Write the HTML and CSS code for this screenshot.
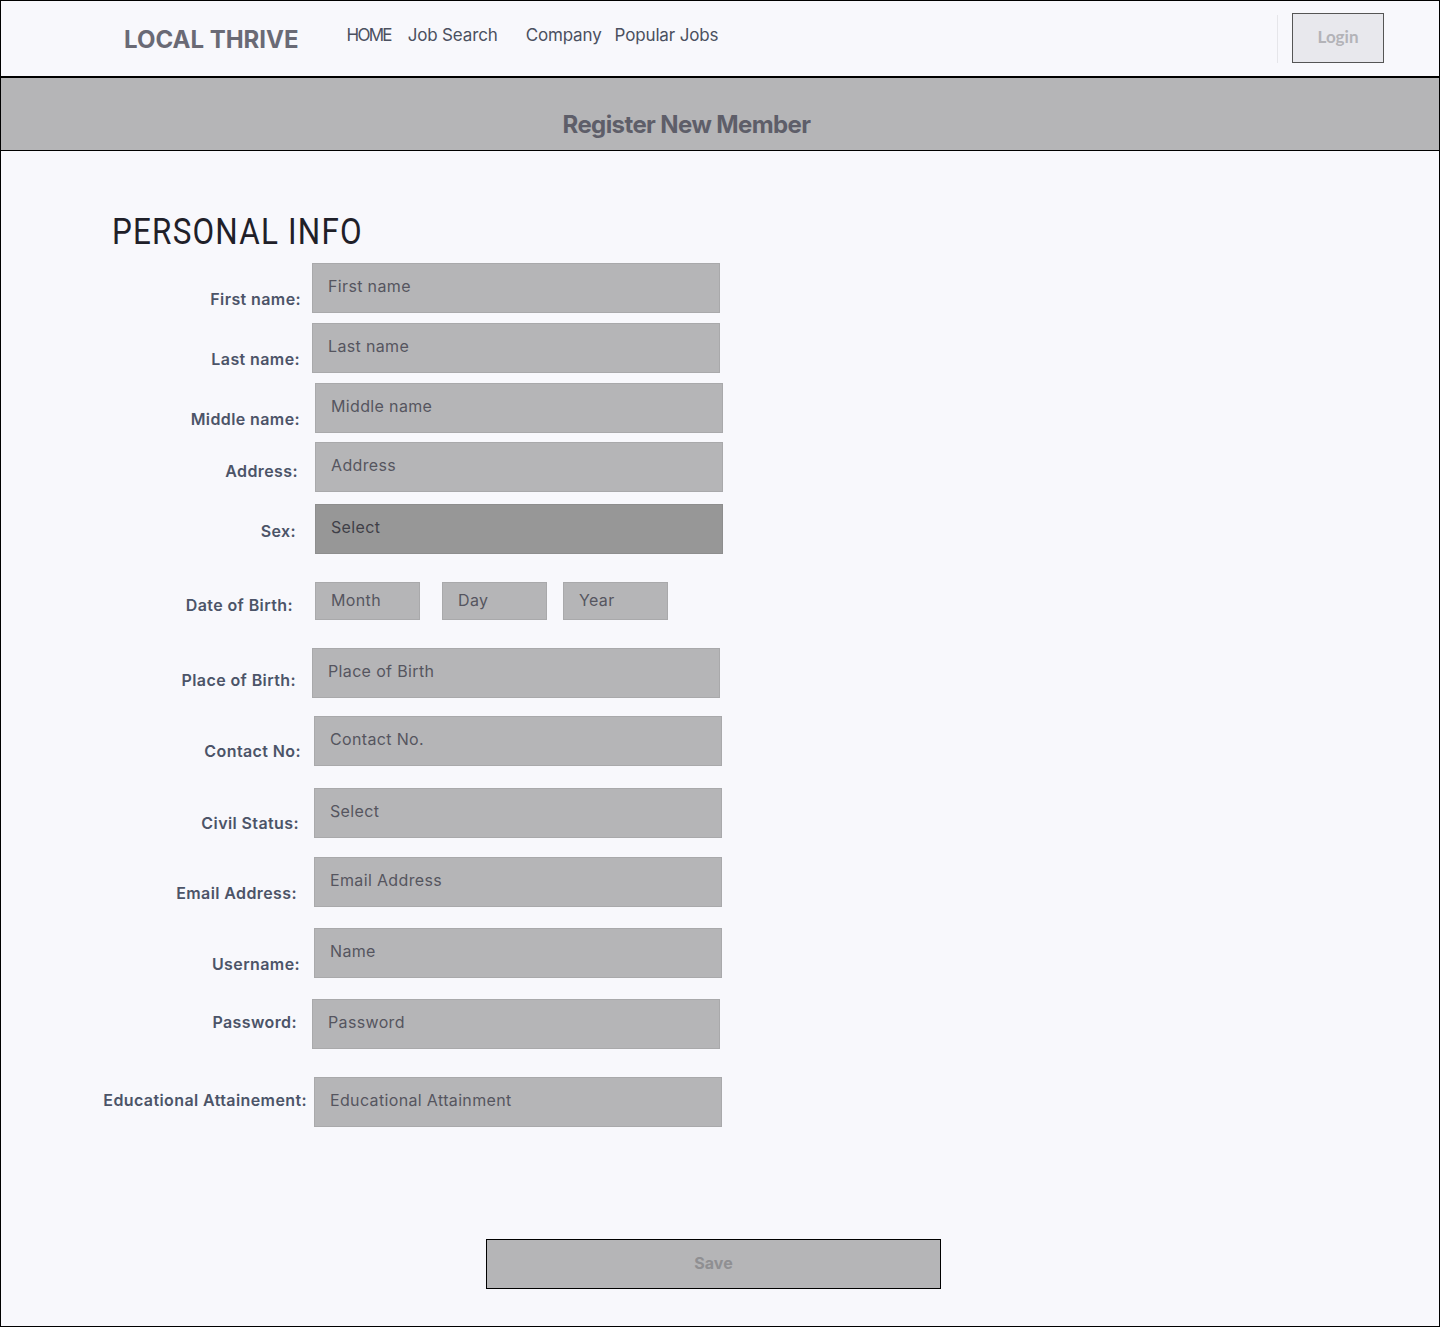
FILE: index.html
```html
<!DOCTYPE html>
<html lang="en">
<head>
<meta charset="utf-8">
<title>Register New Member</title>
<link rel="stylesheet" href="styles.css">
</head>
<body>
<div class="page">
  <header class="topbar">
    <div class="logo">LOCAL THRIVE</div>
    <nav class="nav">
      <a class="nav-home">HOME</a>
      <a class="nav-jobs">Job Search</a>
      <a class="nav-company">Company</a>
      <a class="nav-popular">Popular Jobs</a>
    </nav>
    <div class="divider"></div>
    <button class="login">Login</button>
  </header>
  <div class="banner"><h1>Register New Member</h1></div>
  <main class="main">
    <h2 class="section-title">PERSONAL INFO</h2>
    <form class="form">
      <div class="row r-first"><label>First name:</label><div class="field">First name</div></div>
      <div class="row r-last"><label>Last name:</label><div class="field">Last name</div></div>
      <div class="row r-middle"><label>Middle name:</label><div class="field">Middle name</div></div>
      <div class="row r-address"><label>Address:</label><div class="field">Address</div></div>
      <div class="row r-sex"><label>Sex:</label><div class="field select">Select</div></div>
      <div class="row r-dob"><label>Date of Birth:</label>
        <div class="dob">
          <div class="field small">Month</div>
          <div class="field small day">Day</div>
          <div class="field small year">Year</div>
        </div>
      </div>
      <div class="row r-place"><label>Place of Birth:</label><div class="field">Place of Birth</div></div>
      <div class="row r-contact"><label>Contact No:</label><div class="field">Contact No.</div></div>
      <div class="row r-civil"><label>Civil Status:</label><div class="field">Select</div></div>
      <div class="row r-email"><label>Email Address:</label><div class="field">Email Address</div></div>
      <div class="row r-user"><label>Username:</label><div class="field">Name</div></div>
      <div class="row r-pass"><label>Password:</label><div class="field">Password</div></div>
      <div class="row r-edu"><label>Educational Attainement:</label><div class="field">Educational Attainment</div></div>
      <button type="button" class="save">Save</button>
    </form>
  </main>
</div>
</body>
</html>
```

FILE: styles.css
```css
* { box-sizing: border-box; }
html, body { margin: 0; padding: 0; }
body {
  background: #f8f8fc;
  font-family: Inter, "Noto Sans", sans-serif;
}
.page {
  width: 1440px;
  height: 1327px;
  border: 1px solid #000;
  background: #f8f8fc;
  display: flex;
  flex-direction: column;
}
.topbar {
  height: 77px;
  border-bottom: 2px solid #000;
  display: flex;
  align-items: flex-start;
}
.logo {
  margin: 25px 0 0 123px;
  font-family: Inter, sans-serif;
  font-weight: 700;
  font-size: 24px;
  line-height: 28px;
  letter-spacing: 0;
  color: #6a6a75;
}
.nav {
  display: flex;
  margin: 24px 0 0 48px;
  font-size: 17px;
  line-height: 20px;
  color: #4b5060;
}
.nav a { display: block; letter-spacing: -0.15px; }
.nav .nav-home { letter-spacing: -1.8px; }
.nav-jobs { margin-left: 17px; }
.nav-company { margin-left: 28px; }
.nav-popular { margin-left: 13px; }
.divider {
  margin: 14px 0 0 auto;
  width: 1px;
  height: 48px;
  background: #e6e6ea;
}
.login {
  margin: 12px 55px 0 14px;
  width: 92px;
  height: 50px;
  border: 1px solid #555;
  background: #e8e8ed;
  color: #b3b3b8;
  font-family: Lato, sans-serif;
  font-weight: 700;
  font-size: 17px;
  padding: 0 0 3px;
}
.banner {
  height: 73px;
  background: #b5b5b7;
  border-bottom: 1px solid #000;
  display: flex;
  justify-content: center;
}
.banner h1 {
  margin: 32px 0 0 -67px;
  font-size: 24px;
  line-height: 30px;
  font-weight: 700;
  letter-spacing: -0.6px;
  color: #5e5e69;
}
.main {
  flex: 1;
}
.section-title {
  margin: 58px 0 0 111px;
  font-family: Roboto, sans-serif;
  font-weight: 400;
  font-size: 37px;
  line-height: 46px;
  letter-spacing: 1.4px;
  color: #1f2029;
  transform: scaleX(0.85);
  transform-origin: left center;
}
.form {
  margin: 8px 0 0 -1px;
  display: flex;
  flex-direction: column;
}
.row {
  display: flex;
  align-items: flex-start;
  margin-top: var(--mt);
}
.row label {
  width: var(--lr);
  flex: none;
  text-align: right;
  padding-top: calc(var(--ly) - 10px);
  font-size: 16px;
  line-height: 20px;
  font-weight: 600;
  letter-spacing: 0.4px;
  color: #4c5468;
  white-space: nowrap;
}
.field {
  margin-left: calc(var(--ix) - var(--lr));
  width: 408px;
  height: 50px;
  background: #b5b5b7;
  border: 1px solid #a9a9ab;
  padding: 12px 0 0 15px;
  font-size: 16px;
  line-height: 20px;
  color: #55555f;
  letter-spacing: 0.35px;
}
.field.select { background: #979797; border-color: #8e8e8e; color: #3f3f47; }
.dob { display: flex; margin-left: calc(var(--ix) - var(--lr)); }
.field.small {
  margin-left: 0;
  width: 105px;
  height: 38px;
  padding-top: 7px;
}
.field.day { margin-left: 22px; }
.field.year { margin-left: 16px; }

.r-first   { --mt: 0px;  --lr: 301px; --ix: 312px; --ly: 36px; }
.r-last    { --mt: 10px; --lr: 300px; --ix: 312px; --ly: 36px; }
.r-middle  { --mt: 10px; --lr: 300px; --ix: 315px; --ly: 36px; }
.r-address { --mt: 9px;  --lr: 298px; --ix: 315px; --ly: 29px; }
.r-sex     { --mt: 12px; --lr: 296px; --ix: 315px; --ly: 27px; }
.r-dob     { --mt: 28px; --lr: 293px; --ix: 315px; --ly: 23px; }
.r-place   { --mt: 28px; --lr: 296px; --ix: 312px; --ly: 32px; }
.r-contact { --mt: 18px; --lr: 301px; --ix: 314px; --ly: 35px; }
.r-civil   { --mt: 22px; --lr: 299px; --ix: 314px; --ly: 35px; }
.r-email   { --mt: 19px; --lr: 297px; --ix: 314px; --ly: 36px; }
.r-user    { --mt: 21px; --lr: 300px; --ix: 314px; --ly: 36px; }
.r-pass    { --mt: 21px; --lr: 297px; --ix: 312px; --ly: 23px; }
.r-edu     { --mt: 28px; --lr: 307px; --ix: 314px; --ly: 23px; }

.save {
  margin: 112px 0 0 486px;
  width: 455px;
  height: 50px;
  background: #b5b5b7;
  border: 1px solid #000;
  font-family: Inter, sans-serif;
  font-weight: 700;
  font-size: 16px;
  color: #8f8f92;
  padding: 0 0 3px;
}
```
